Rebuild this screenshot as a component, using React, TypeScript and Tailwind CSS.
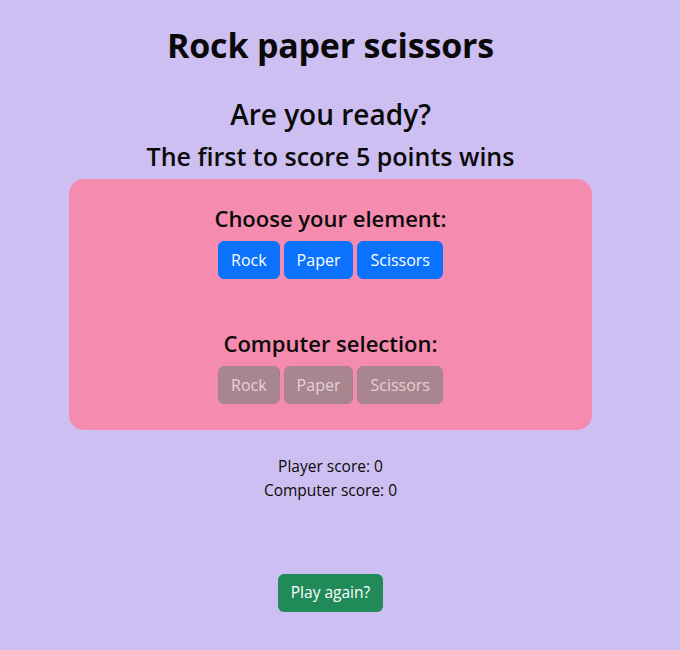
import React from "react";

const choices = ["Rock", "Paper", "Scissors"];

function ChoiceRow({ disabled }: { disabled?: boolean }) {
  return (
    <div className="flex justify-center gap-[4px]">
      {choices.map((c) => (
        <button
          key={c}
          className={
            disabled
              ? "h-[38px] px-[12px] rounded-[6px] border border-[#a18390] bg-[#a9868f] text-[16px] text-[#e6d0d8]"
              : "h-[38px] px-[12px] rounded-[6px] border border-[#0a72fd] bg-[#0a72fd] text-[16px] text-white"
          }
        >
          {c}
        </button>
      ))}
    </div>
  );
}

export default function App() {
  return (
    <div className="min-h-[650px] bg-[#cebff2] font-['Open_Sans',sans-serif] text-[#0a0a0a]">
      <div className="w-[661px] flex flex-col items-center pt-[26px] pb-[38px]">
        <h1 className="text-[34px] leading-[38px] font-bold tracking-[-0.2px]">Rock paper scissors</h1>
        <h2 className="mt-[34px] text-[28px] leading-[33px] font-semibold tracking-[0px]">Are you ready?</h2>
        <h3 className="mt-[10px] text-[25px] leading-[30px] font-semibold tracking-[0px]">
          The first to score 5 points wins
        </h3>

        <div className="mt-[8px] w-[523px] rounded-[15px] bg-[#f58bae] pt-[26px] pb-[26px] flex flex-col items-center">
          <h4 className="text-[22px] leading-[27px] font-semibold tracking-[0px]">Choose your element:</h4>
          <div className="mt-[9px]">
            <ChoiceRow />
          </div>
          <h4 className="mt-[51px] text-[22px] leading-[27px] font-semibold tracking-[0px]">Computer selection:</h4>
          <div className="mt-[9px]">
            <ChoiceRow disabled />
          </div>
        </div>

        <div className="mt-[24px] text-[15.5px] leading-[24px] text-center">
          <p>Player score: 0</p>
          <p>Computer score: 0</p>
        </div>

        <button className="mt-[72px] h-[38px] w-[105px] rounded-[6px] bg-[#218a59] text-white text-[15.5px]">
          Play again?
        </button>
      </div>
    </div>
  );
}
